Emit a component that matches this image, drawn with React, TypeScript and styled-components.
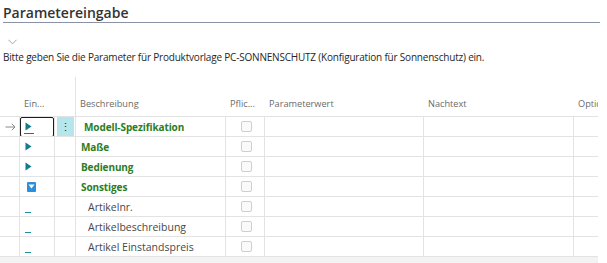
import React from 'react';
import styled, { createGlobalStyle, css } from 'styled-components';

type RowKind = 'group' | 'open' | 'item';

interface RowData {
    text: string;
    kind: RowKind;
    selected?: boolean;
}

const rows: RowData[] = [
    { text: 'Modell-Spezifikation', kind: 'group', selected: true },
    { text: 'Maße', kind: 'group' },
    { text: 'Bedienung', kind: 'group' },
    { text: 'Sonstiges', kind: 'open' },
    { text: 'Artikelnr.', kind: 'item' },
    { text: 'Artikelbeschreibung', kind: 'item' },
    { text: 'Artikel Einstandspreis', kind: 'item' },
];

const columns = '20px 35px 21px 150px 39px 159px 150px 24px';

const GlobalStyle = createGlobalStyle`
    html, body {
        margin: 0;
        padding: 0;
        background: #ffffff;
    }
    body {
        font-family: "Open Sans", "Noto Sans", sans-serif;
        color: #333;
    }
`;

const Page = styled.div`
    width: 607px;
    height: 263px;
    overflow: hidden;
    display: flex;
    flex-direction: column;
`;

const Title = styled.h1`
    margin: 0 7px 0 3px;
    padding-top: 3px;
    height: 19px;
    font-size: 14px;
    font-weight: 600;
    line-height: 19px;
    color: #333;
    border-bottom: 1px solid #8a92a6;
`;

const Chevron = styled.div`
    margin: 16px 0 0 8px;
    height: 8px;
    display: flex;
    align-items: center;
`;

const Description = styled.p`
    margin: 5px 0 0 3px;
    font-size: 10px;
    line-height: 14px;
    color: #262626;
    letter-spacing: -0.2px;
    white-space: nowrap;
`;

const Grid = styled.div`
    margin-top: 13px;
    width: 598px;
    display: grid;
    grid-template-columns: ${columns};
`;

const HeadCell = styled.div<{ $divider?: boolean }>`
    height: 40px;
    padding: 0 4px 6px;
    box-sizing: border-box;
    display: flex;
    align-items: flex-end;
    font-size: 9.2px;
    color: #6b6b6b;
    white-space: nowrap;
    overflow: hidden;
    border-bottom: 1px solid #e3e3e3;
    ${({ $divider }) => $divider && css`
        border-right: 1px solid #e3e3e3;
    `}
`;

const Cell = styled.div<{ $last?: boolean }>`
    height: 20px;
    box-sizing: border-box;
    display: flex;
    align-items: center;
    border-bottom: 1px solid #e3e3e3;
    border-right: ${({ $last }) => ($last ? 'none' : '1px solid #e3e3e3')};
    position: relative;
    overflow: hidden;
`;

const MarkerCell = styled(Cell)`
    justify-content: center;
    padding-left: 2px;
`;

const SelectBox = styled.div`
    position: absolute;
    inset: 0 0 -1px 0;
    border: 1.5px solid #1c1c1c;
    border-radius: 2px;
`;

const MenuCell = styled(Cell)<{ $active?: boolean }>`
    justify-content: center;
    ${({ $active }) => $active && css`
        &::before {
            content: '';
            position: absolute;
            inset: 0 1px 0 2px;
            background: #b5e6ec;
        }
    `}
`;

const Dots = styled.span`
    position: relative;
    font-size: 11px;
    line-height: 1;
    color: #333;
`;

const Caption = styled.span<{ $kind: RowKind; $selected?: boolean }>`
    white-space: nowrap;
    ${({ $kind, $selected }) => $kind === 'item'
        ? css`
            padding-left: 12px;
            font-size: 10.5px;
            color: #474747;
            font-weight: 400;
        `
        : css`
            padding-left: ${$selected ? '8px' : '5px'};
            font-size: 10px;
            letter-spacing: -0.1px;
            color: #2b7d1e;
            font-weight: 700;
        `}
`;

const ExpandCell = styled(Cell)`
    padding-left: 5px;
`;

const Toggle = styled.div<{ $underline?: boolean }>`
    position: relative;
    display: flex;
    align-items: center;
    ${({ $underline }) => $underline && css`
        &::after {
            content: '';
            position: absolute;
            left: -1px;
            right: -2px;
            bottom: -3px;
            height: 1px;
            background: #107c8c;
        }
    `}
`;

const OpenBox = styled.div`
    margin-left: 2px;
    width: 9px;
    height: 10px;
    border-radius: 1px;
    background: #2a8fdc;
    display: flex;
    align-items: center;
    justify-content: center;
`;

const Dash = styled.div`
    width: 6px;
    height: 1px;
    margin-top: 11px;
    background: #1c8ea0;
`;

const CheckCell = styled(Cell)`
    justify-content: center;
    padding-left: 2px;
`;

const Check = styled.div`
    width: 9px;
    height: 9px;
    border: 1px solid #cfcfcf;
    border-radius: 2px;
    background: #fafafa;
`;

const Footer = styled.div`
    width: 598px;
    height: 8px;
    background: #f3f3f3;
`;

const RightTriangle = () => (
    <svg width="7" height="9" viewBox="0 0 7 9">
        <path d="M0.5 0.5 L6.5 4.5 L0.5 8.5 Z" fill="#107c8c" />
    </svg>
);

const CurrentArrow = () => (
    <svg width="11" height="8" viewBox="0 0 11 8">
        <path d="M0.5 4 H10 M6.8 0.8 L10 4 L6.8 7.2" stroke="#7a7a7a" strokeWidth="0.9" fill="none" />
    </svg>
);

const ParameterGrid = () => (
    <Grid>
        <HeadCell />
        <HeadCell>Ein...</HeadCell>
        <HeadCell $divider />
        <HeadCell>Beschreibung</HeadCell>
        <HeadCell>Pflic...</HeadCell>
        <HeadCell>Parameterwert</HeadCell>
        <HeadCell>Nachtext</HeadCell>
        <HeadCell>Optic</HeadCell>
        {rows.map((row) => (
            <React.Fragment key={row.text}>
                <MarkerCell>
                    {row.selected && <CurrentArrow />}
                </MarkerCell>
                <ExpandCell>
                    {row.selected && <SelectBox />}
                    {row.kind === 'group' && (
                        <Toggle $underline={row.selected}>
                            <RightTriangle />
                        </Toggle>
                    )}
                    {row.kind === 'open' && (
                        <OpenBox>
                            <svg width="7" height="5" viewBox="0 0 7 5">
                                <path d="M0.5 0.5 H6.5 L3.5 4.5 Z" fill="#ffffff" />
                            </svg>
                        </OpenBox>
                    )}
                    {row.kind === 'item' && <Dash />}
                </ExpandCell>
                <MenuCell $active={row.selected}>
                    {row.selected && <Dots>⋮</Dots>}
                </MenuCell>
                <Cell>
                    <Caption $kind={row.kind} $selected={row.selected}>{row.text}</Caption>
                </Cell>
                <CheckCell>
                    <Check />
                </CheckCell>
                <Cell />
                <Cell />
                <Cell $last />
            </React.Fragment>
        ))}
    </Grid>
);

const App = () => (
    <Page>
        <GlobalStyle />
        <Title>Parametereingabe</Title>
        <Chevron>
            <svg width="9" height="6" viewBox="0 0 9 6">
                <path d="M0.5 0.8 L4.5 4.8 L8.5 0.8" stroke="#9a9a9a" strokeWidth="0.9" fill="none" />
            </svg>
        </Chevron>
        <Description>
            Bitte geben Sie die Parameter für Produktvorlage PC-SONNENSCHUTZ (Konfiguration für Sonnenschutz) ein.
        </Description>
        <ParameterGrid />
        <Footer />
    </Page>
);

export default App;
